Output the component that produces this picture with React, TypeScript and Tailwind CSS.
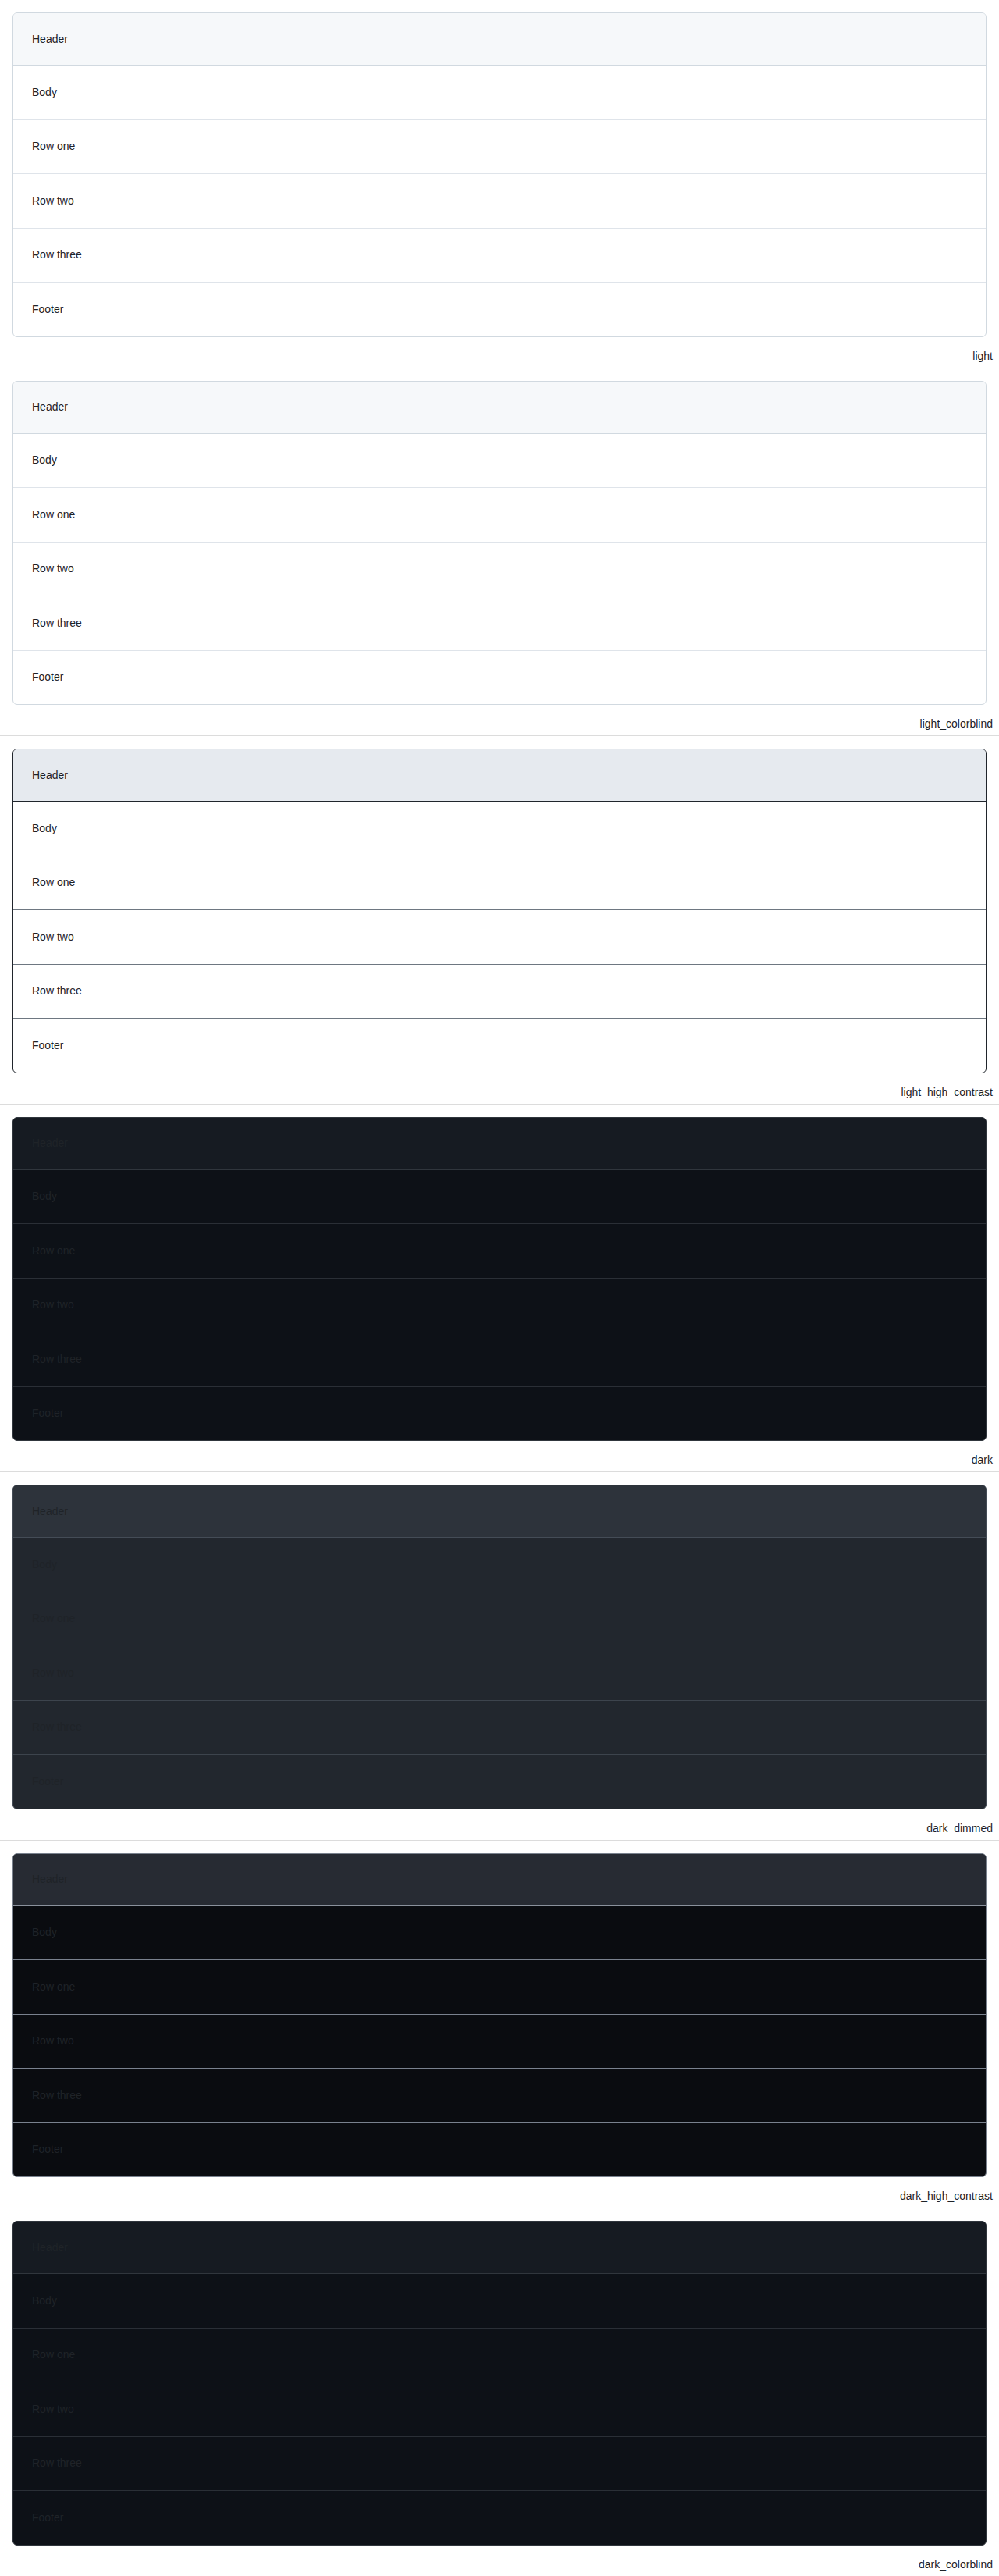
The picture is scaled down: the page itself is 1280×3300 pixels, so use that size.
import React, { FC } from 'react';

interface ITheme {
  name: string;
  outer: string;
  header: string;
  headerBorder: string;
  body: string;
  rowBorder: string;
}

const themes: ITheme[] = [
  {
    name: 'light',
    outer: 'border-[#d1d9e0]',
    header: 'bg-[#f6f8fa]',
    headerBorder: 'border-[#d1d9e0]',
    body: 'bg-white',
    rowBorder: 'border-[#dfe4ea]',
  },
  {
    name: 'light_colorblind',
    outer: 'border-[#d1d9e0]',
    header: 'bg-[#f6f8fa]',
    headerBorder: 'border-[#d1d9e0]',
    body: 'bg-white',
    rowBorder: 'border-[#dfe4ea]',
  },
  {
    name: 'light_high_contrast',
    outer: 'border-[#20252c]',
    header: 'bg-[#e6eaef]',
    headerBorder: 'border-[#20252c]',
    body: 'bg-white',
    rowBorder: 'border-[#6e7781]',
  },
  {
    name: 'dark',
    outer: 'border-[#30363d]',
    header: 'bg-[#161b22]',
    headerBorder: 'border-[#30363d]',
    body: 'bg-[#0d1117]',
    rowBorder: 'border-[#2a2f36]',
  },
  {
    name: 'dark_dimmed',
    outer: 'border-[#444c56]',
    header: 'bg-[#2d333b]',
    headerBorder: 'border-[#444c56]',
    body: 'bg-[#22272e]',
    rowBorder: 'border-[#3d444d]',
  },
  {
    name: 'dark_high_contrast',
    outer: 'border-[#7a828e]',
    header: 'bg-[#272b33]',
    headerBorder: 'border-[#8a919c]',
    body: 'bg-[#0a0c10]',
    rowBorder: 'border-[#7a828e]',
  },
  {
    name: 'dark_colorblind',
    outer: 'border-[#30363d]',
    header: 'bg-[#161b22]',
    headerBorder: 'border-[#30363d]',
    body: 'bg-[#0d1117]',
    rowBorder: 'border-[#2a2f36]',
  },
];

const rows = ['Body', 'Row one', 'Row two', 'Row three', 'Footer'];

const ThemeBox: FC<{ theme: ITheme }> = ({ theme }) => {
  return (
    <div className="border-b border-[#dcdcdc]">
      <div className="px-4 pt-4">
        <div className={`border rounded-md overflow-hidden ${theme.outer} ${theme.body}`}>
          <div className={`h-[66px] flex items-center px-6 ${theme.header}`}>Header</div>
          {rows.map((r) => (
            <div
              key={r}
              className={`h-[69.5px] flex items-center px-6 border-t ${
                r === 'Body' ? theme.headerBorder : theme.rowBorder
              }`}
            >
              {r}
            </div>
          ))}
        </div>
      </div>
      <div className="mt-[14px] pb-[4px] pr-2 text-right text-sm leading-[21px] text-[#1f2328]">
        {theme.name}
      </div>
    </div>
  );
};

const App: FC = () => {
  return (
    <div className="bg-white text-[#1f2328] text-sm leading-[21px] font-['Liberation_Sans',Arial,sans-serif]">
      {themes.map((t) => (
        <ThemeBox key={t.name} theme={t} />
      ))}
    </div>
  );
};

export default App;
